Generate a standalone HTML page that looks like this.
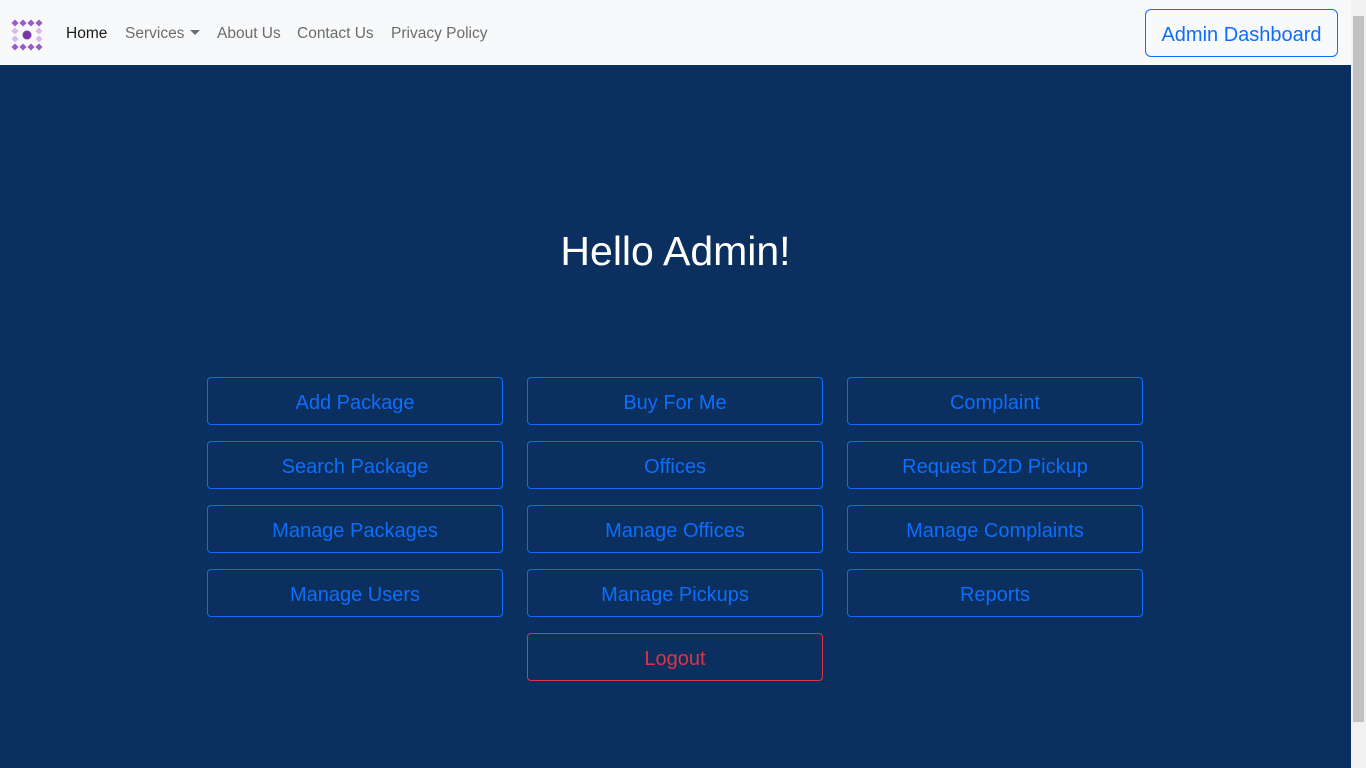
<!DOCTYPE html>
<html><head><style>
*{box-sizing:border-box;margin:0;padding:0}
body{width:1366px;height:768px;overflow:hidden;font-family:"Liberation Sans",sans-serif;background:#0b2f5f;position:relative}
.nav{position:absolute;left:0;top:0;width:1351px;height:65px;background:#f8f9fa}
.nav a{position:absolute;top:25px;font-size:15.5px;color:#6c6c6c;text-decoration:none;white-space:nowrap}
.admin{position:absolute;left:1145px;top:9px;width:193px;height:48px;border:1px solid #0d6efd;border-radius:6px;color:#0d6efd;font-size:20px;text-align:center;line-height:50px}
.sb{position:absolute;left:1351px;top:0;width:15px;height:768px;background:#f1f1f1}
.thumb{position:absolute;left:1353px;top:16px;width:11px;height:706px;background:#c1c1c1}
h1{position:absolute;left:0;width:1351px;top:228px;text-align:center;color:#fff;font-weight:400;font-size:41px}
.b{position:absolute;width:296px;height:48px;border:1px solid #0d6efd;border-radius:4px;color:#0d6efd;font-size:20px;text-align:center;line-height:50px}
</style></head><body>
<div class="nav">
<svg style="position:absolute;left:11px;top:19px" width="32" height="32" viewBox="0 0 32 32">
<g fill="#9b59c9">
<rect x="1.5" y="1.5" width="5" height="5" transform="rotate(45 4 4)"/><rect x="9.5" y="1.5" width="5" height="5" transform="rotate(45 12 4)"/><rect x="17.5" y="1.5" width="5" height="5" transform="rotate(45 20 4)"/><rect x="25.5" y="1.5" width="5" height="5" transform="rotate(45 28 4)"/>
<rect x="1.5" y="25.5" width="5" height="5" transform="rotate(45 4 28)"/><rect x="9.5" y="25.5" width="5" height="5" transform="rotate(45 12 28)"/><rect x="17.5" y="25.5" width="5" height="5" transform="rotate(45 20 28)"/><rect x="25.5" y="25.5" width="5" height="5" transform="rotate(45 28 28)"/>
</g><g fill="#d9b8ee">
<rect x="1.5" y="9.5" width="5" height="5" transform="rotate(45 4 12)"/><rect x="1.5" y="17.5" width="5" height="5" transform="rotate(45 4 20)"/><rect x="25.5" y="9.5" width="5" height="5" transform="rotate(45 28 12)"/><rect x="25.5" y="17.5" width="5" height="5" transform="rotate(45 28 20)"/></g>
<circle cx="16" cy="16" r="4.5" fill="#7a35a8"/></svg>
<a style="left:66px;color:#1a1a1a">Home</a>
<a style="left:125px">Services <span style="display:inline-block;border-left:5px solid transparent;border-right:5px solid transparent;border-top:5px solid #6c6c6c;vertical-align:3px;margin-left:1px"></span></a>
<a style="left:217px">About Us</a>
<a style="left:297px">Contact Us</a>
<a style="left:391px">Privacy Policy</a>
<div class="admin">Admin Dashboard</div>
</div>
<div class="sb"></div><div class="thumb"></div>
<h1>Hello Admin!</h1>
<div class="b" style="left:207px;top:377px">Add Package</div>
<div class="b" style="left:527px;top:377px">Buy For Me</div>
<div class="b" style="left:847px;top:377px">Complaint</div>
<div class="b" style="left:207px;top:441px">Search Package</div>
<div class="b" style="left:527px;top:441px">Offices</div>
<div class="b" style="left:847px;top:441px">Request D2D Pickup</div>
<div class="b" style="left:207px;top:505px">Manage Packages</div>
<div class="b" style="left:527px;top:505px">Manage Offices</div>
<div class="b" style="left:847px;top:505px">Manage Complaints</div>
<div class="b" style="left:207px;top:569px">Manage Users</div>
<div class="b" style="left:527px;top:569px">Manage Pickups</div>
<div class="b" style="left:847px;top:569px">Reports</div>
<div class="b" style="left:527px;top:633px;border-color:#dc3545;color:#dc3545">Logout</div>
</body></html>
